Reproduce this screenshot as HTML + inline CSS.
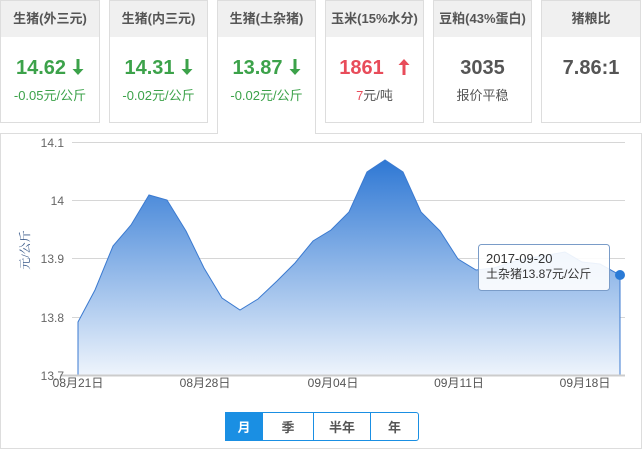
<!DOCTYPE html><html><head><meta charset="utf-8"><style>
body{margin:0;width:642px;height:452px;background:#fff;font-family:"Liberation Sans","Noto Sans CJK SC",sans-serif;position:relative;overflow:hidden}
.t{position:absolute;top:0;height:123px;border:1px solid #ddd;background:#fff;box-sizing:border-box;text-align:center}
.t .h{height:36px;background:#f0f0f0;line-height:36px;font-size:13px;font-weight:bold;color:#555}
.t .v{font-size:20px;font-weight:bold;margin-top:18px;height:26px;line-height:26px}
.t .s{font-size:13px;color:#555;margin-top:4px}
.t .g{color:#3ca24a}.t .r{color:#e84c5a}.t .k{color:#555}
.ar{display:inline-block;vertical-align:-2px;margin-left:6px}
.panel{position:absolute;left:0;top:133px;width:642px;height:316px;border:1px solid #ddd;box-sizing:border-box}
.btn{position:absolute;top:412px;height:29px;line-height:29px;text-align:center;font-size:13px;font-weight:bold;color:#555;border:1px solid #1a8fe3;box-sizing:border-box;background:#fff}
</style></head><body>
<div class="panel"></div>
<div class="t" style="left:0;width:100px"><div class="h">生猪(外三元)</div><div class="v g">14.62<svg class="ar" width="12" height="18"><path d="M4.5 1h3v10h4L6 17 0.5 11h4z" fill="#3ca24a"/></svg></div><div class="s g">-0.05元/公斤</div></div>
<div class="t" style="left:109px;width:99px"><div class="h">生猪(内三元)</div><div class="v g">14.31<svg class="ar" width="12" height="18"><path d="M4.5 1h3v10h4L6 17 0.5 11h4z" fill="#3ca24a"/></svg></div><div class="s g">-0.02元/公斤</div></div>
<div class="t" style="left:217px;width:99px;height:134px;border-bottom:none"><div class="h">生猪(土杂猪)</div><div class="v g">13.87<svg class="ar" width="12" height="18"><path d="M4.5 1h3v10h4L6 17 0.5 11h4z" fill="#3ca24a"/></svg></div><div class="s g">-0.02元/公斤</div></div>
<div class="t" style="left:325px;width:99px"><div class="h">玉米(15%水分)</div><div class="v r">1861<svg class="ar" style="margin-left:14px" width="12" height="18"><path d="M4.5 17h3V7h4L6 1 0.5 7h4z" fill="#e84c5a"/></svg></div><div class="s"><span class="r">7</span>元/吨</div></div>
<div class="t" style="left:433px;width:99px"><div class="h">豆粕(43%蛋白)</div><div class="v k">3035</div><div class="s">报价平稳</div></div>
<div class="t" style="left:541px;width:100px"><div class="h">猪粮比</div><div class="v k">7.86:1</div></div>
<svg style="position:absolute;left:0;top:0" width="642" height="452">
<defs><linearGradient id="gr" x1="0" y1="160" x2="0" y2="375" gradientUnits="userSpaceOnUse"><stop offset="0" stop-color="#2f78d4"/><stop offset="1" stop-color="#eef4fc"/></linearGradient></defs>
<g stroke="#d6d6d6" stroke-width="1"><line x1="72" y1="142.5" x2="625" y2="142.5"/><line x1="72" y1="200.5" x2="625" y2="200.5"/><line x1="72" y1="258.5" x2="625" y2="258.5"/><line x1="72" y1="317.5" x2="625" y2="317.5"/></g>
<path d="M78,322 L95,290 L113,246 L131,225 L149,195 L167,200 L186,231 L204,268 L222,298 L240,310 L258,299 L277,281 L295,263 L313,241 L331,230 L349,212 L367,172 L385,160 L403,172 L421,212 L440,231 L458,259 L476,270 L494,268 L512,262 L530,258 L548,255 L565,252 L582,262 L600,264 L620,275 L620,375 L78,375Z" fill="url(#gr)" stroke="#3b7ad0" stroke-width="1"/>
<line x1="60" y1="375.5" x2="625" y2="375.5" stroke="#ccc" stroke-width="2"/>
<g fill="#666" font-size="12" text-anchor="end"><text x="64" y="147">14.1</text><text x="64" y="205">14</text><text x="64" y="263">13.9</text><text x="64" y="322">13.8</text><text x="64" y="380">13.7</text></g>
<g fill="#555" font-size="12" text-anchor="middle"><text x="78" y="387">08月21日</text><text x="205" y="387">08月28日</text><text x="333" y="387">09月04日</text><text x="459" y="387">09月11日</text><text x="585" y="387">09月18日</text></g>
<text transform="translate(29,250) rotate(-90)" fill="#3a5a8a" font-size="12" text-anchor="middle" font-family="Liberation Serif,Noto Serif CJK SC,serif">元/公斤</text>
<circle cx="620" cy="275" r="5" fill="#2a7ad6"/>
<rect x="478.5" y="244.5" width="131" height="46" rx="3" fill="#fff" fill-opacity="0.9" stroke="#7a9cc8"/>
<text x="486" y="263" font-size="13" fill="#333">2017-09-20</text>
<text x="486" y="278" font-size="12" fill="#333">土杂猪13.87元/公斤</text>
</svg>
<div class="btn" style="left:225px;width:38px;background:#1a8fe3;color:#fff">月</div>
<div class="btn" style="left:262px;width:52px">季</div>
<div class="btn" style="left:313px;width:58px">半年</div>
<div class="btn" style="left:370px;width:49px;border-radius:0 3px 3px 0">年</div>
</body></html>
